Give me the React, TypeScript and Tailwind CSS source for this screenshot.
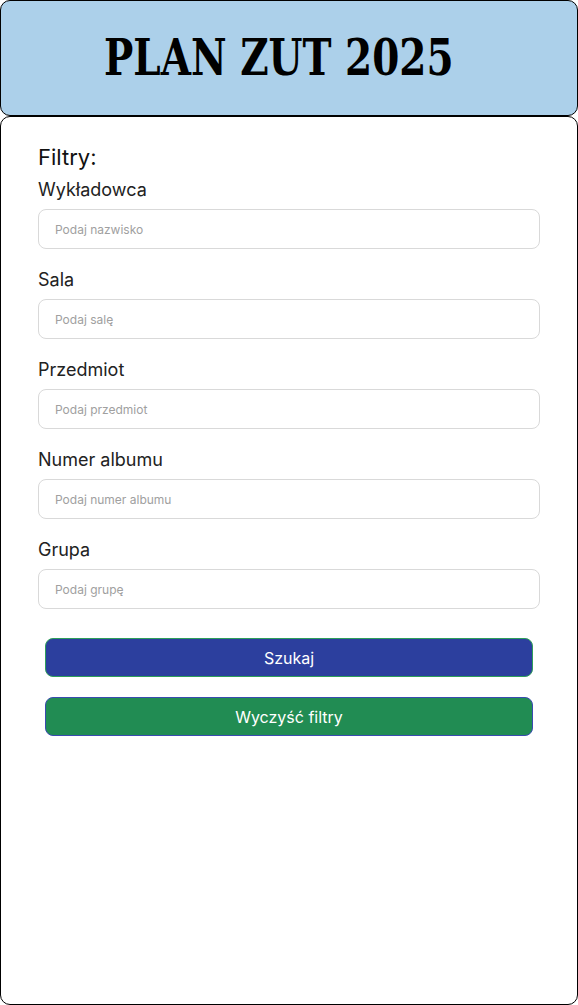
import React from 'react';

const fields = [
  { label: 'Wykładowca', placeholder: 'Podaj nazwisko' },
  { label: 'Sala', placeholder: 'Podaj salę' },
  { label: 'Przedmiot', placeholder: 'Podaj przedmiot' },
  { label: 'Numer albumu', placeholder: 'Podaj numer albumu' },
  { label: 'Grupa', placeholder: 'Podaj grupę' },
];

const App: React.FC = () => {
  return (
    <div className="flex h-[1005px] w-[578px] flex-col bg-white font-['Inter',sans-serif]">
      <header className="flex h-[116px] shrink-0 items-center justify-center rounded-[10px] border border-black bg-[#acd0ea] pr-[20px]">
        <h1 className="scale-x-[0.866] font-['DejaVu_Serif_Condensed','DejaVu_Serif',serif] text-[50px] font-bold leading-none text-black">
          PLAN ZUT 2025
        </h1>
      </header>
      <main className="flex flex-1 flex-col rounded-[10px] border border-black px-[37px] pt-[27px]">
        <h2 className="text-[22px] leading-[27px] text-[#111]">Filtry:</h2>
        <div className="mt-[8px] flex flex-col gap-[20px]">
          {fields.map((f) => (
            <div key={f.label} className="flex flex-col">
              <label className="text-[18px] leading-[22px] text-[#222]">{f.label}</label>
              <input
                type="text"
                placeholder={f.placeholder}
                className="mt-[8px] h-[40px] w-full rounded-[8px] border border-[#d9d9d9] px-[16px] text-[12px] text-[#333] outline-none placeholder:text-[#a0a0a0]"
              />
            </div>
          ))}
        </div>
        <div className="mt-[29px] flex flex-col gap-[20px] px-[7px]">
          <button className="h-[39px] w-full rounded-[8px] border border-[#2e9e5b] bg-[#2c3f9e] text-[16px] text-white">
            Szukaj
          </button>
          <button className="h-[39px] w-full rounded-[8px] border border-[#3a4bb0] bg-[#218c53] text-[16px] text-white">
            Wyczyść filtry
          </button>
        </div>
      </main>
    </div>
  );
};

export default App;
